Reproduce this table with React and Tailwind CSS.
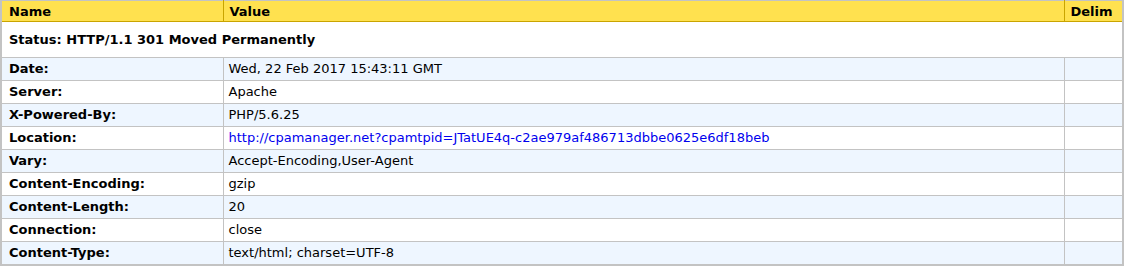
const rows = [
  ['Date:', 'Wed, 22 Feb 2017 15:43:11 GMT'],
  ['Server:', 'Apache'],
  ['X-Powered-By:', 'PHP/5.6.25'],
  ['Location:', 'http://cpamanager.net?cpamtpid=JTatUE4q-c2ae979af486713dbbe0625e6df18beb', true],
  ['Vary:', 'Accept-Encoding,User-Agent'],
  ['Content-Encoding:', 'gzip'],
  ['Content-Length:', '20'],
  ['Connection:', 'close'],
  ['Content-Type:', 'text/html; charset=UTF-8'],
];

export default function App() {
  return (
    <div className="w-[1124px] bg-white" style={{ fontFamily: '"DejaVu Sans", Verdana, sans-serif' }}>
      <table className="w-full border-collapse border-2 border-t border-[#c3c3c3] text-[13px] text-black">
        <thead>
          <tr className="bg-[#ffe14f] border-b border-[#c9a400]">
            <th className="w-[222px] h-[21px] px-[7px] text-left font-bold border-r border-[#c9a400] py-0 leading-none">Name</th>
            <th className="px-[6px] text-left font-bold border-r border-[#c9a400] py-0 leading-none">Value</th>
            <th className="w-[59px] px-[6px] text-left font-bold py-0 leading-none">Delim</th>
          </tr>
        </thead>
        <tbody>
          <tr className="bg-white border-b border-[#c3c3c3]">
            <td colSpan={3} className="h-[36px] px-[7px] font-bold">Status: HTTP/1.1 301 Moved Permanently</td>
          </tr>
          {rows.map(([name, value, link], i) => (
            <tr key={name} className={`${i % 2 === 0 ? 'bg-[#eef6ff]' : 'bg-white'} border-b border-[#c3c3c3]`}>
              <td className="h-[23px] px-[7px] py-0 font-bold border-r border-[#c3c3c3]">{name}</td>
              <td className={`px-[5px] py-0 border-r border-[#c3c3c3] ${link ? 'text-[#0000ee]' : ''}`}>{value}</td>
              <td className="px-[6px] py-0"></td>
            </tr>
          ))}
        </tbody>
      </table>
    </div>
  );
}
